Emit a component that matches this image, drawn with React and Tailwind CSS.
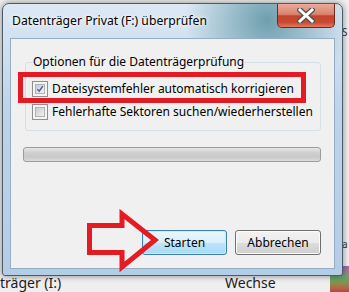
import React from 'react';

const Checkbox = ({ checked }) => (
    <div className="w-[16px] h-[16px] border border-[#8e8f8f] bg-[#f4f4f4] p-[2px] shrink-0">
        <div className="w-full h-full border border-[#b3b3b3] bg-gradient-to-br from-[#c9cbcf] to-[#f1f1f1] flex items-center justify-center">
            {checked && (
                <svg width="12" height="12" viewBox="0 0 12 12">
                    <path d="M2 6.2 L4.8 9.2 L10.2 1.8" fill="none" stroke="#3f5d9c" strokeWidth="2" />
                </svg>
            )}
        </div>
    </div>
);

const App = () => {
    return (
        <div className="relative w-[349px] h-[292px] overflow-hidden bg-[#eeeeee] font-['Noto_Sans',sans-serif] text-black">
            {/* desktop behind the dialog */}
            <div className="absolute left-0 top-[273px] text-[14px] leading-[20px] text-[#1b1b1b] whitespace-nowrap">träger (I:)</div>
            <div className="absolute left-[225px] top-[273px] text-[14px] leading-[20px] text-[#1b1b1b] whitespace-nowrap">Wechse</div>
            <div className="absolute left-[342px] top-[26px] text-[10px] leading-[12px] text-[#333]">S</div>
            <div className="absolute left-[342px] top-[238px] text-[10px] leading-[12px] text-[#333]">a</div>
            <div className="absolute left-[330px] top-[266px] w-[19px] h-[26px] bg-gradient-to-b from-[#b05ab0] via-[#5ba75b] to-[#c04040]" />

            {/* dialog window */}
            <div className="absolute left-[2px] top-[3px] w-[341px] h-[273px] rounded-t-[7px] rounded-b-[3px] border border-[#4e5b68] shadow-[0_0_6px_rgba(0,0,0,0.45)] flex flex-col bg-[radial-gradient(ellipse_at_78%_6%,#6e9fae_0%,rgba(110,159,174,0)_22%),linear-gradient(#dce8f4,#bcd3ea_40%,#b4cde7)]">
                <div className="h-[34px] flex items-start shrink-0">
                    <span className="pl-[9px] pt-[8px] text-[12.2px] leading-[18px] text-black whitespace-nowrap [text-shadow:0_0_6px_#ffffff,0_0_3px_#ffffff]">
                        Datenträger Privat (F:) überprüfen
                    </span>
                    <div className="ml-auto mr-[7px] w-[58px] h-[24px] rounded-b-[5px] border border-t-0 border-[#6b2b22] bg-[linear-gradient(#eaaa9c_0%,#d9836f_45%,#c4432c_52%,#c94a33_80%,#e37a5e_100%)] flex items-center justify-center">
                        <svg width="18" height="15" viewBox="0 0 18 15">
                            <path d="M3 2 L15 13 M15 2 L3 13" stroke="#505050" strokeWidth="5.5" strokeLinecap="square" />
                            <path d="M3 2 L15 13 M15 2 L3 13" stroke="#ffffff" strokeWidth="3" strokeLinecap="square" />
                        </svg>
                    </div>
                </div>

                <div className="flex-1 flex px-[7px] pb-[6px]">
                    <div className="relative flex-1 flex flex-col bg-[#f0f0f0] border border-[#97adc4] text-[12px] whitespace-nowrap">
                        {/* group box */}
                        <div className="relative mt-[23px] ml-[14px] w-[296px] h-[69px] border border-[#d5dfe5] rounded-[3px] pt-[18px] pl-[6px] flex flex-col gap-[7px]">
                            <span className="absolute -top-[10px] left-[6px] px-[1px] bg-[#f0f0f0] leading-[18px]">
                                Optionen für die Datenträgerprüfung
                            </span>
                            <div className="flex items-center gap-[4px] h-[16px]">
                                <Checkbox checked />
                                <span className="leading-[16px]">Dateisystemfehler automatisch korrigieren</span>
                            </div>
                            <div className="flex items-center gap-[4px] h-[16px]">
                                <Checkbox />
                                <span className="leading-[16px]">Fehlerhafte Sektoren suchen/wiederherstellen</span>
                            </div>
                        </div>

                        {/* progress bar */}
                        <div className="mt-[16px] ml-[12px] w-[298px] h-[15px] rounded-[3px] border border-[#9c9c9c] bg-[linear-gradient(#e6e6e6,#d0d0d0_35%,#c9c9c9_70%,#dcdcdc)]" />

                        {/* buttons */}
                        <div className="mt-auto mb-[13px] pr-[13px] flex justify-end gap-[8px]">
                            <button className="w-[85px] h-[25px] rounded-[3px] border border-[#3c7fb1] bg-[linear-gradient(#eaf6fd,#d9f0fc_50%,#bee6fd_51%,#a7d9f5)] shadow-[inset_0_0_0_1px_#c8ecff] leading-[20px]">
                                Starten
                            </button>
                            <button className="w-[86px] h-[25px] rounded-[3px] border border-[#707070] bg-[linear-gradient(#f2f2f2,#ebebeb_50%,#dddddd_51%,#cfcfcf)] shadow-[inset_0_0_0_1px_#fcfcfc] leading-[20px]">
                                Abbrechen
                            </button>
                        </div>

                        {/* red highlight */}
                        <div className="absolute left-[7px] top-[33px] w-[288px] h-[31px] border-[5px] border-[#e41b23]" />
                    </div>
                </div>
            </div>

            {/* red arrow annotation */}
            <svg className="absolute left-[85px] top-[209px]" width="76" height="64" viewBox="0 0 76 64">
                <polygon points="4.5,16.5 37,16.5 37,5 70,31 37,58 37,43.5 4.5,43.5" fill="none" stroke="#e41b23" strokeWidth="5" strokeLinejoin="miter" />
            </svg>
        </div>
    );
};

export default App;
